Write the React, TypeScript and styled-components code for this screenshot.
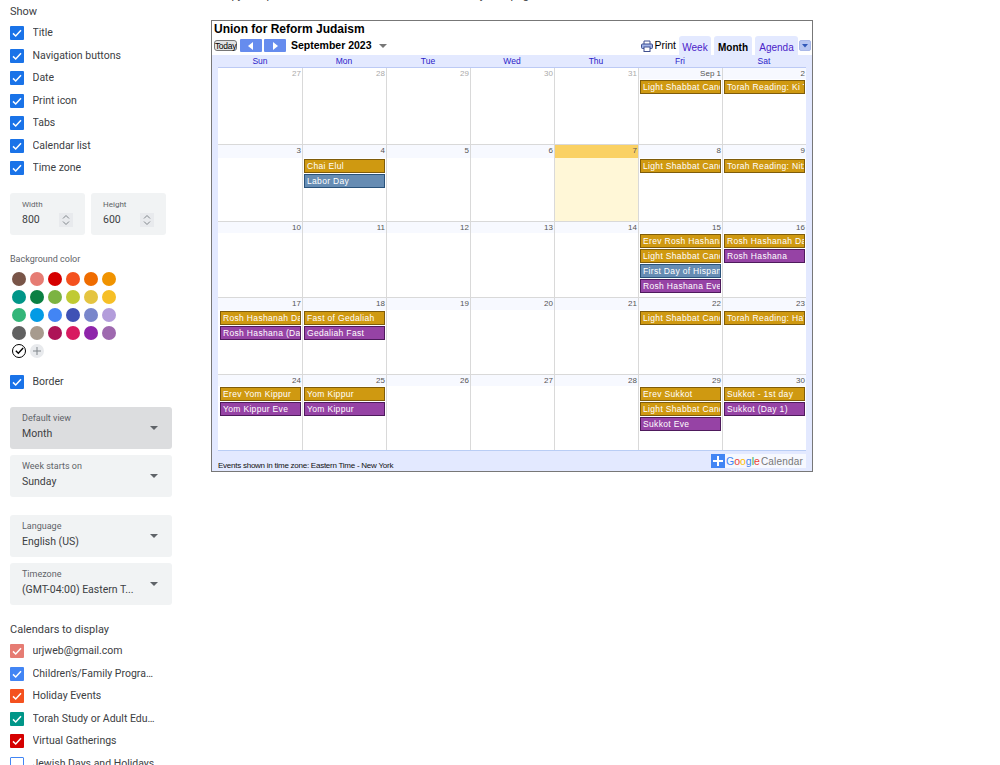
import React from 'react'
import styled, { createGlobalStyle } from 'styled-components'

const GlobalStyle = createGlobalStyle`
  html, body {
    margin: 0;
    padding: 0;
    background: #fff;
    overflow: hidden;
    font-family: Roboto, "Liberation Sans", sans-serif;
  }
`

const Page = styled.div`
  display: flex;
  align-items: flex-start;
  width: 1000px;
  height: 765px;
  overflow: hidden;
`

/* ---------- settings column ---------- */

const Sidebar = styled.aside`
  flex: none;
  width: 162px;
  margin-left: 10px;
  padding-top: 5px;
  color: #3c4043;
`
const SectionTitle = styled.div<{ $top?: number }>`
  margin-top: ${(p) => p.$top ?? 0}px;
  font-size: 11px;
  line-height: 14px;
  color: #3c4043;
`
const CheckList = styled.div<{ $top: number }>`
  display: flex;
  flex-direction: column;
  margin-top: ${(p) => p.$top}px;
`
const CheckRow = styled.label`
  display: flex;
  align-items: center;
  gap: 8.5px;
  height: 22.5px;
  font-size: 10.5px;
`
const Box = styled.span<{ $color: string; $on: boolean }>`
  flex: none;
  display: flex;
  align-items: center;
  justify-content: center;
  box-sizing: border-box;
  width: 14px;
  height: 14px;
  border-radius: 1px;
  background: ${(p) => (p.$on ? p.$color : '#fff')};
  border: ${(p) => (p.$on ? 'none' : `1px solid ${p.$color}`)};
`
const RowLabel = styled.span`
  max-width: 123px;
  margin-top: -1px;
  overflow: hidden;
  white-space: nowrap;
  text-overflow: ellipsis;
`
const SizeRow = styled.div`
  display: flex;
  gap: 6px;
  margin-top: 13px;
`
const SizeField = styled.div`
  position: relative;
  box-sizing: border-box;
  width: 75px;
  height: 42px;
  padding: 6px 12px;
  border-radius: 3px;
  background: #f1f3f4;
`
const SizeLabel = styled.div`
  font-size: 8px;
  line-height: 11px;
  color: #5f6368;
`
const FieldLabel = styled.div`
  font-size: 9px;
  line-height: 11px;
  color: #5f6368;
`
const FieldValue = styled.div`
  margin-top: 3px;
  font-size: 10.5px;
  line-height: 13px;
  color: #3c4043;
`
const Spinner = styled.span`
  position: absolute;
  right: 12px;
  top: 20px;
  display: flex;
  align-items: center;
  justify-content: center;
  width: 14px;
  height: 14px;
  background: #e8eaed;
`
const ColorTitle = styled.div`
  margin-top: 18px;
  font-size: 9px;
  line-height: 12px;
  color: #5f6368;
`
const Swatches = styled.div`
  display: grid;
  grid-template-columns: repeat(6, 14px);
  grid-auto-rows: 14px;
  gap: 4px;
  margin: 7px 0 0 2px;
`
const Swatch = styled.span<{ $color: string }>`
  width: 14px;
  height: 14px;
  border-radius: 50%;
  background: ${(p) => p.$color};
`
const NoColor = styled.span`
  display: flex;
  align-items: center;
  justify-content: center;
  box-sizing: border-box;
  width: 14px;
  height: 14px;
  border-radius: 50%;
  border: 1px solid #000;
`
const AddColor = styled.span`
  display: flex;
  align-items: center;
  justify-content: center;
  width: 14px;
  height: 14px;
  border-radius: 50%;
  background: #e8eaed;
`
const SelectGroup = styled.div<{ $top: number }>`
  display: flex;
  flex-direction: column;
  gap: 6px;
  margin-top: ${(p) => p.$top}px;
`
const SelectBox = styled.div<{ $active?: boolean }>`
  position: relative;
  box-sizing: border-box;
  height: 42px;
  padding: 6px 12px;
  border-radius: 3px;
  background: ${(p) => (p.$active ? '#dcdddf' : '#f1f3f4')};
`
const SelectValue = styled.div`
  margin-top: 2px;
  font-size: 10.5px;
  line-height: 15px;
  color: #3c4043;
`
const Caret = styled.span`
  position: absolute;
  right: 14px;
  top: 19px;
  width: 0;
  height: 0;
  border-left: 4px solid transparent;
  border-right: 4px solid transparent;
  border-top: 4px solid #5f6368;
`

/* ---------- embed preview ---------- */

const Preview = styled.main`
  flex: none;
  margin-left: 39px;
`
const HelpLine = styled.div`
  height: 31px;
  margin-top: -11px;
  padding-left: 7px;
  font-size: 11px;
  line-height: 13px;
  white-space: nowrap;
  color: #3c4043;
`
const Frame = styled.div`
  box-sizing: border-box;
  display: flex;
  flex-direction: column;
  width: 602px;
  height: 452px;
  border: 1px solid #777;
  background: #fff;
  font-family: "Liberation Sans", Arial, sans-serif;
`
const CalTitle = styled.div`
  height: 15px;
  padding: 1px 0 0 2px;
  font-size: 12px;
  font-weight: 700;
  line-height: 14px;
  color: #000;
`
const Toolbar = styled.div`
  display: flex;
  align-items: flex-end;
  height: 18px;
  padding-left: 2px;
`
const TodayButton = styled.span`
  box-sizing: border-box;
  display: flex;
  align-items: center;
  justify-content: center;
  width: 23px;
  height: 11px;
  margin-bottom: 4px;
  border: 1px solid #777;
  border-radius: 3px;
  background: #e3e3e3;
  font-size: 8.5px;
  letter-spacing: -0.3px;
  color: #000;
`
const NavButton = styled.span<{ $first?: boolean }>`
  display: flex;
  align-items: center;
  justify-content: center;
  width: 22px;
  height: 13px;
  margin: 0 0 3px ${(p) => (p.$first ? 3 : 2)}px;
  border-radius: 1px;
  background: #668cee;
`
const MonthLabel = styled.span`
  margin: 0 0 3px 5px;
  font-size: 10.5px;
  font-weight: 700;
  line-height: 14px;
  color: #000;
`
const MonthCaret = styled.span`
  width: 0;
  height: 0;
  margin: 0 0 7px 7px;
  border-left: 4px solid transparent;
  border-right: 4px solid transparent;
  border-top: 4px solid #777;
`
const ToolbarRight = styled.div`
  display: flex;
  align-items: flex-end;
  margin-left: auto;
  height: 100%;
`
const PrintLink = styled.span`
  display: flex;
  align-items: center;
  gap: 1px;
  margin: 0 3px 3px 0;
  font-size: 10.5px;
  line-height: 13px;
  color: #000;
`
const Tab = styled.span<{ $width: number; $active?: boolean }>`
  box-sizing: border-box;
  width: ${(p) => p.$width}px;
  height: 19px;
  margin-right: 3px;
  padding-top: 6px;
  border-radius: 3px 3px 0 0;
  background: #e3e9ff;
  font-size: 10px;
  line-height: 12px;
  text-align: center;
  font-weight: ${(p) => (p.$active ? 700 : 400)};
  color: ${(p) => (p.$active ? '#000' : '#4a22c8')};
`
const ListToggle = styled.span`
  display: flex;
  align-items: center;
  justify-content: center;
  box-sizing: border-box;
  width: 12px;
  height: 11px;
  margin: 0 1px 4px -2px;
  border: 1px solid #a9b8e8;
  border-radius: 2px;
  background: #b7c6f1;
`
const GridArea = styled.div`
  display: flex;
  flex-direction: column;
  padding: 0 6px;
  background: #e3e9ff;
`
const WeekHeader = styled.div`
  display: grid;
  grid-template-columns: repeat(7, 84px);
  height: 12px;
  border-bottom: 1px solid #bccaf5;
`
const DayName = styled.span`
  font-size: 8.5px;
  line-height: 13px;
  text-align: center;
  color: #2a22c8;
`
const MonthGrid = styled.div`
  display: grid;
  grid-template-columns: repeat(7, 84px);
  grid-template-rows: 76px 77px 76px 77px 76px;
  background: #fff;
  border-bottom: 1px solid #b9cdf5;
`
const Cell = styled.div<{ $first: boolean; $today: boolean; $firstRow: boolean }>`
  box-sizing: border-box;
  min-width: 0;
  overflow: hidden;
  border-left: ${(p) => (p.$first ? 'none' : '1px solid #d9d9d9')};
  border-top: ${(p) => (p.$firstRow ? 'none' : '1px solid #d9d9d9')};
  background: ${(p) => (p.$today ? '#fff7d7' : '#fff')};
`
const CellHead = styled.div<{ $height: number; $muted: boolean; $today: boolean }>`
  box-sizing: border-box;
  height: ${(p) => p.$height}px;
  padding-right: 1px;
  font-size: 8px;
  line-height: 11px;
  text-align: right;
  color: ${(p) => (p.$muted ? '#aaa' : '#555')};
  background: ${(p) => (p.$today ? '#fad163' : p.$muted ? '#fff' : '#f7f9ff')};
`
const ChipStack = styled.div<{ $first: boolean }>`
  display: flex;
  flex-direction: column;
  gap: 1px;
  margin: 1px 1px 0 ${(p) => (p.$first ? 2 : 1)}px;
`
const Chip = styled.div<{ $kind: Kind }>`
  box-sizing: border-box;
  height: 14px;
  padding-left: 2px;
  overflow: hidden;
  white-space: nowrap;
  font-size: 8.5px;
  line-height: 12px;
  letter-spacing: 0.33px;
  color: #fff;
  background: ${(p) => ({ gold: '#cf9911', blue: '#668cb3', purple: '#9643a5' }[p.$kind])};
  border: 1px solid ${(p) => ({ gold: '#7f5c0a', blue: '#29527a', purple: '#4e1a5c' }[p.$kind])};
`
const Footer = styled.div`
  flex: 1;
  display: flex;
  align-items: flex-start;
  justify-content: space-between;
  padding: 3px 6px 0;
  background: #e3e9ff;
`
const ZoneNote = styled.span`
  margin-top: 6px;
  font-size: 8px;
  line-height: 11px;
  letter-spacing: -0.25px;
  color: #111;
`
const Badge = styled.span`
  display: flex;
  align-items: center;
  width: 95px;
  height: 14px;
  background: #f6f8fe;
  font-size: 10.5px;
`
const BadgePlus = styled.span`
  display: flex;
  align-items: center;
  justify-content: center;
  width: 14px;
  height: 14px;
  margin-right: 1px;
  background: #4285f4;
`
const Letter = styled.span<{ $color: string }>`
  color: ${(p) => p.$color};
`
const BadgeWord = styled.span`
  margin-left: 1px;
  font-size: 10px;
  letter-spacing: 0.2px;
  color: #777;
`

/* ---------- data ---------- */

type Kind = 'gold' | 'blue' | 'purple'
type Ev = [Kind, string]
type Day = { label: string; muted?: boolean; today?: boolean; events?: Ev[] }

const shabbat: Ev = ['gold', 'Light Shabbat Candles']

const weeks: { head: number; days: Day[] }[] = [
  {
    head: 11,
    days: [
      { label: '27', muted: true },
      { label: '28', muted: true },
      { label: '29', muted: true },
      { label: '30', muted: true },
      { label: '31', muted: true },
      { label: 'Sep 1', events: [shabbat] },
      { label: '2', events: [['gold', 'Torah Reading: Ki Tavo']] }
    ]
  },
  {
    head: 13,
    days: [
      { label: '3' },
      { label: '4', events: [['gold', 'Chai Elul'], ['blue', 'Labor Day']] },
      { label: '5' },
      { label: '6' },
      { label: '7', today: true },
      { label: '8', events: [shabbat] },
      { label: '9', events: [['gold', 'Torah Reading: Nitzavim']] }
    ]
  },
  {
    head: 11,
    days: [
      { label: '10' },
      { label: '11' },
      { label: '12' },
      { label: '13' },
      { label: '14' },
      {
        label: '15',
        events: [
          ['gold', 'Erev Rosh Hashana'],
          shabbat,
          ['blue', 'First Day of Hispanic Heritage Month'],
          ['purple', 'Rosh Hashana Eve']
        ]
      },
      { label: '16', events: [['gold', 'Rosh Hashanah Day 1'], ['purple', 'Rosh Hashana']] }
    ]
  },
  {
    head: 12,
    days: [
      { label: '17', events: [['gold', 'Rosh Hashanah Day 2'], ['purple', 'Rosh Hashana (Day 2)']] },
      { label: '18', events: [['gold', 'Fast of Gedaliah'], ['purple', 'Gedaliah Fast']] },
      { label: '19' },
      { label: '20' },
      { label: '21' },
      { label: '22', events: [shabbat] },
      { label: '23', events: [['gold', "Torah Reading: Ha'azinu"]] }
    ]
  },
  {
    head: 11,
    days: [
      { label: '24', events: [['gold', 'Erev Yom Kippur'], ['purple', 'Yom Kippur Eve']] },
      { label: '25', events: [['gold', 'Yom Kippur'], ['purple', 'Yom Kippur']] },
      { label: '26' },
      { label: '27' },
      { label: '28' },
      { label: '29', events: [['gold', 'Erev Sukkot'], shabbat, ['purple', 'Sukkot Eve']] },
      { label: '30', events: [['gold', 'Sukkot - 1st day'], ['purple', 'Sukkot (Day 1)']] }
    ]
  }
]

const dayNames = ['Sun', 'Mon', 'Tue', 'Wed', 'Thu', 'Fri', 'Sat']
const showOptions = ['Title', 'Navigation buttons', 'Date', 'Print icon', 'Tabs', 'Calendar list', 'Time zone']
const swatchColors = [
  '#795548', '#e67c73', '#d50000', '#f4511e', '#ef6c00', '#f09300',
  '#009688', '#0b8043', '#7cb342', '#c0ca33', '#e4c441', '#f6bf26',
  '#33b679', '#039be5', '#4285f4', '#3f51b5', '#7986cb', '#b39ddb',
  '#616161', '#a79b8e', '#ad1457', '#d81b60', '#8e24aa', '#9e69af'
]
const calendars: [string, string, boolean][] = [
  ['urjweb@gmail.com', '#e67c73', true],
  ["Children's/Family Programs", '#4285f4', true],
  ['Holiday Events', '#f4511e', true],
  ['Torah Study or Adult Education', '#009688', true],
  ['Virtual Gatherings', '#d50000', true],
  ['Jewish Days and Holidays', '#4285f4', false]
]
const googleLetters: [string, string][] = [
  ['G', '#4285f4'],
  ['o', '#ea4335'],
  ['o', '#fbbc05'],
  ['g', '#4285f4'],
  ['l', '#34a853'],
  ['e', '#ea4335']
]

const CheckMark = ({ color = '#fff', size = 12 }: { color?: string; size?: number }) => (
  <svg width={size} height={size} viewBox='0 0 12 12' fill='none'>
    <path d='M2 6.4 4.7 9 10 3.2' stroke={color} strokeWidth='1.5' />
  </svg>
)

const Check = ({ label, color = '#1a73e8', on = true }: { label: string; color?: string; on?: boolean }) => (
  <CheckRow>
    <Box $color={color} $on={on}>
      {on && <CheckMark />}
    </Box>
    <RowLabel>{label}</RowLabel>
  </CheckRow>
)

const SizeInput = ({ label, value }: { label: string; value: string }) => (
  <SizeField>
    <SizeLabel>{label}</SizeLabel>
    <FieldValue>{value}</FieldValue>
    <Spinner>
      <svg width='8' height='12' viewBox='0 0 8 12' fill='none' stroke='#80868b' strokeWidth='1'>
        <path d='M1 4.5 4 1.5 7 4.5M1 7.5 4 10.5 7 7.5' />
      </svg>
    </Spinner>
  </SizeField>
)

const Select = ({ label, value, active }: { label: string; value: string; active?: boolean }) => (
  <SelectBox $active={active}>
    <FieldLabel>{label}</FieldLabel>
    <SelectValue>{value}</SelectValue>
    <Caret />
  </SelectBox>
)

const App = () => (
  <Page>
    <GlobalStyle />
    <Sidebar>
      <SectionTitle>Show</SectionTitle>
      <CheckList $top={3}>
        {showOptions.map((o) => (
          <Check key={o} label={o} />
        ))}
      </CheckList>
      <SizeRow>
        <SizeInput label='Width' value='800' />
        <SizeInput label='Height' value='600' />
      </SizeRow>
      <ColorTitle>Background color</ColorTitle>
      <Swatches>
        {swatchColors.map((c) => (
          <Swatch key={c} $color={c} />
        ))}
        <NoColor>
          <CheckMark color='#000' size={11} />
        </NoColor>
        <AddColor>
          <svg width='10' height='10' viewBox='0 0 10 10' stroke='#80868b' strokeWidth='1'>
            <path d='M5 1v8M1 5h8' />
          </svg>
        </AddColor>
      </Swatches>
      <CheckList $top={13}>
        <Check label='Border' />
      </CheckList>
      <SelectGroup $top={14}>
        <Select active label='Default view' value='Month' />
        <Select label='Week starts on' value='Sunday' />
      </SelectGroup>
      <SelectGroup $top={18}>
        <Select label='Language' value='English (US)' />
        <Select label='Timezone' value='(GMT-04:00) Eastern T...' />
      </SelectGroup>
      <SectionTitle $top={18}>Calendars to display</SectionTitle>
      <CheckList $top={3}>
        {calendars.map(([name, color, on]) => (
          <Check key={name} label={name} color={color} on={on} />
        ))}
      </CheckList>
    </Sidebar>

    <Preview>
      <HelpLine>Copy and paste the code to embed this calendar in any web page.</HelpLine>
      <Frame>
        <CalTitle>Union for Reform Judaism</CalTitle>
        <Toolbar>
          <TodayButton>Today</TodayButton>
          <NavButton $first>
            <svg width='6' height='8' viewBox='0 0 6 8' fill='#fff'>
              <path d='M5 0v8L0 4z' />
            </svg>
          </NavButton>
          <NavButton>
            <svg width='6' height='8' viewBox='0 0 6 8' fill='#fff'>
              <path d='M1 0v8l5-4z' />
            </svg>
          </NavButton>
          <MonthLabel>September 2023</MonthLabel>
          <MonthCaret />
          <ToolbarRight>
            <PrintLink>
              <svg width='12' height='12' viewBox='0 0 12 12' fill='none' stroke='#3f4f8f' strokeWidth='1'>
                <path d='M3 4V1h6v3' />
                <rect x='.5' y='4' width='11' height='4.5' rx='1' fill='#9fb2e6' />
                <rect x='3' y='7' width='6' height='4.5' fill='#fff' />
              </svg>
              Print
            </PrintLink>
            <Tab $width={32}>Week</Tab>
            <Tab $width={38} $active>
              Month
            </Tab>
            <Tab $width={43}>Agenda</Tab>
            <ListToggle>
              <svg width='6' height='4' viewBox='0 0 6 4' fill='#3158b8'>
                <path d='M0 0h6L3 3.5z' />
              </svg>
            </ListToggle>
          </ToolbarRight>
        </Toolbar>
        <GridArea>
          <WeekHeader>
            {dayNames.map((d) => (
              <DayName key={d}>{d}</DayName>
            ))}
          </WeekHeader>
          <MonthGrid>
            {weeks.map((week, w) =>
              week.days.map((day, d) => (
                <Cell key={`${w}-${d}`} $first={d === 0} $firstRow={w === 0} $today={!!day.today}>
                  <CellHead $height={week.head} $muted={!!day.muted} $today={!!day.today}>
                    {day.label}
                  </CellHead>
                  {day.events && (
                    <ChipStack $first={d === 0}>
                      {day.events.map(([kind, text], i) => (
                        <Chip key={i} $kind={kind}>
                          {text}
                        </Chip>
                      ))}
                    </ChipStack>
                  )}
                </Cell>
              ))
            )}
          </MonthGrid>
        </GridArea>
        <Footer>
          <ZoneNote>Events shown in time zone: Eastern Time - New York</ZoneNote>
          <Badge>
            <BadgePlus>
              <svg width='10' height='10' viewBox='0 0 10 10' stroke='#fff' strokeWidth='2'>
                <path d='M5 0v10M0 5h10' />
              </svg>
            </BadgePlus>
            {googleLetters.map(([l, c], i) => (
              <Letter key={i} $color={c}>
                {l}
              </Letter>
            ))}
            <BadgeWord>Calendar</BadgeWord>
          </Badge>
        </Footer>
      </Frame>
    </Preview>
  </Page>
)

export default App
